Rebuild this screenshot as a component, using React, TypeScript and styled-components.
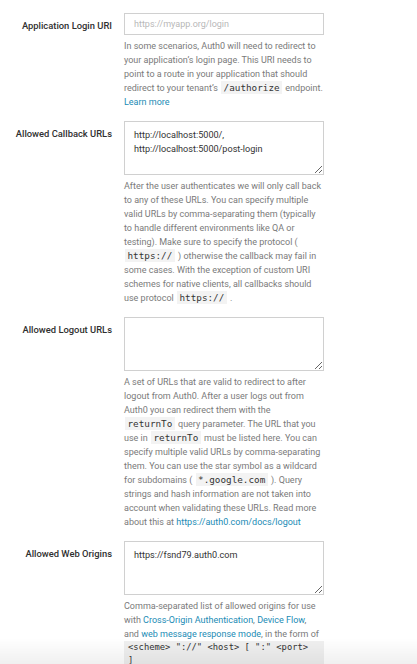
import React from 'react';
import styled, { createGlobalStyle } from 'styled-components';

const GlobalStyle = createGlobalStyle`
  body {
    margin: 0;
    background: #ffffff;
    font-family: Roboto, "Liberation Sans", sans-serif;
  }
`;

const App: React.FC = () => {
  return (
    <>
      <GlobalStyle />
      <Form>
        <Field>
          <Label>Application Login URI</Label>
          <Control>
            <Input placeholder="https://myapp.org/login" />
            <Help>
              In some scenarios, Auth0 will need to redirect to your application&rsquo;s login page. This
              URI needs to point to a route in your application that should redirect to your tenant&rsquo;s{' '}
              <Code>/authorize</Code> endpoint. <HelpLink href="#">Learn more</HelpLink>
            </Help>
          </Control>
        </Field>

        <Field>
          <Label>Allowed Callback URLs</Label>
          <Control>
            <TextArea defaultValue={'http://localhost:5000/,\nhttp://localhost:5000/post-login'} />
            <Help>
              After the user authenticates we will only call back to any of these URLs. You can specify
              multiple valid URLs by comma-separating them (typically to handle different environments like
              QA or testing). Make sure to specify the protocol ( <Code>https://</Code> ) otherwise the
              callback may fail in some cases. With the exception of custom URI schemes for native clients,
              all callbacks should use protocol <Code>https://</Code> .
            </Help>
          </Control>
        </Field>

        <Field>
          <Label>Allowed Logout URLs</Label>
          <Control>
            <TextArea defaultValue="" />
            <Help>
              A set of URLs that are valid to redirect to after logout from Auth0. After a user logs out from
              Auth0 you can redirect them with the <Code>returnTo</Code> query parameter. The URL that you use
              in <Code>returnTo</Code> must be listed here. You can specify multiple valid URLs by
              comma-separating them. You can use the star symbol as a wildcard for subdomains ({' '}
              <Code>*.google.com</Code> ). Query strings and hash information are not taken into account when
              validating these URLs. Read more about this at{' '}
              <HelpLink href="#">https://auth0.com/docs/logout</HelpLink>
            </Help>
          </Control>
        </Field>

        <Field>
          <Label>Allowed Web Origins</Label>
          <Control>
            <TextArea defaultValue="https://fsnd79.auth0.com" />
            <Help>
              Comma-separated list of allowed origins for use with{' '}
              <HelpLink href="#">Cross-Origin Authentication</HelpLink>,{' '}
              <HelpLink href="#">Device Flow</HelpLink>, and{' '}
              <HelpLink href="#">web message response mode</HelpLink>, in the form of
            </Help>
            <CodeBlock>{'<scheme> "://" <host> [ ":" <port>\n]'}</CodeBlock>
          </Control>
        </Field>
      </Form>
      <BottomFade />
    </>
  );
};

export default App;

const Form = styled.div`
  display: flex;
  flex-direction: column;
  gap: 12px;
  padding-top: 13px;
`;

const Field = styled.div`
  display: grid;
  grid-template-columns: 112px 200px;
  column-gap: 12px;
  align-items: start;
`;

const Label = styled.label`
  text-align: right;
  padding-top: 6px;
  font-size: 9.4px;
  line-height: 14px;
  font-weight: 500;
  color: #2f2f2f;
`;

const Control = styled.div`
  display: flex;
  flex-direction: column;
`;

const Input = styled.input`
  box-sizing: border-box;
  width: 200px;
  height: 22px;
  padding: 0 9px;
  border: 1px solid #d0d0d0;
  border-radius: 0;
  font-family: Roboto, "Liberation Sans", sans-serif;
  font-size: 9px;
  color: #333333;
  outline: none;

  &::placeholder {
    color: #b8b8b8;
  }
`;

const TextArea = styled.textarea`
  box-sizing: border-box;
  width: 200px;
  height: 54px;
  padding: 6px 9px;
  border: 1px solid #d0d0d0;
  border-radius: 0;
  font-family: Roboto, "Liberation Sans", sans-serif;
  font-size: 9.1px;
  line-height: 14px;
  color: #333333;
  outline: none;
  resize: vertical;
`;

const Help = styled.p`
  margin: 4px 0 0;
  padding-right: 1px;
  font-size: 9px;
  line-height: 14px;
  color: #7a7a7a;
`;

const HelpLink = styled.a`
  color: #1a8bb5;
  text-decoration: none;
`;

const Code = styled.code`
  font-family: "DejaVu Sans Mono", "Liberation Mono", monospace;
  font-size: 9.3px;
  line-height: 1;
  color: #333333;
  background: #f3f3f3;
  padding: 1px 2.5px;
  margin: 0 1px;
`;

const CodeBlock = styled.pre`
  margin: 0;
  padding: 0 4px;
  font-family: "DejaVu Sans Mono", "Liberation Mono", monospace;
  font-size: 8.8px;
  line-height: 13px;
  color: #333333;
  background: #f0f0f0;
  white-space: pre-wrap;
`;

const BottomFade = styled.div`
  position: fixed;
  left: 0;
  right: 0;
  bottom: 0;
  height: 26px;
  pointer-events: none;
  background: linear-gradient(to bottom, rgba(0, 0, 0, 0), rgba(0, 0, 0, 0.06));
`;
